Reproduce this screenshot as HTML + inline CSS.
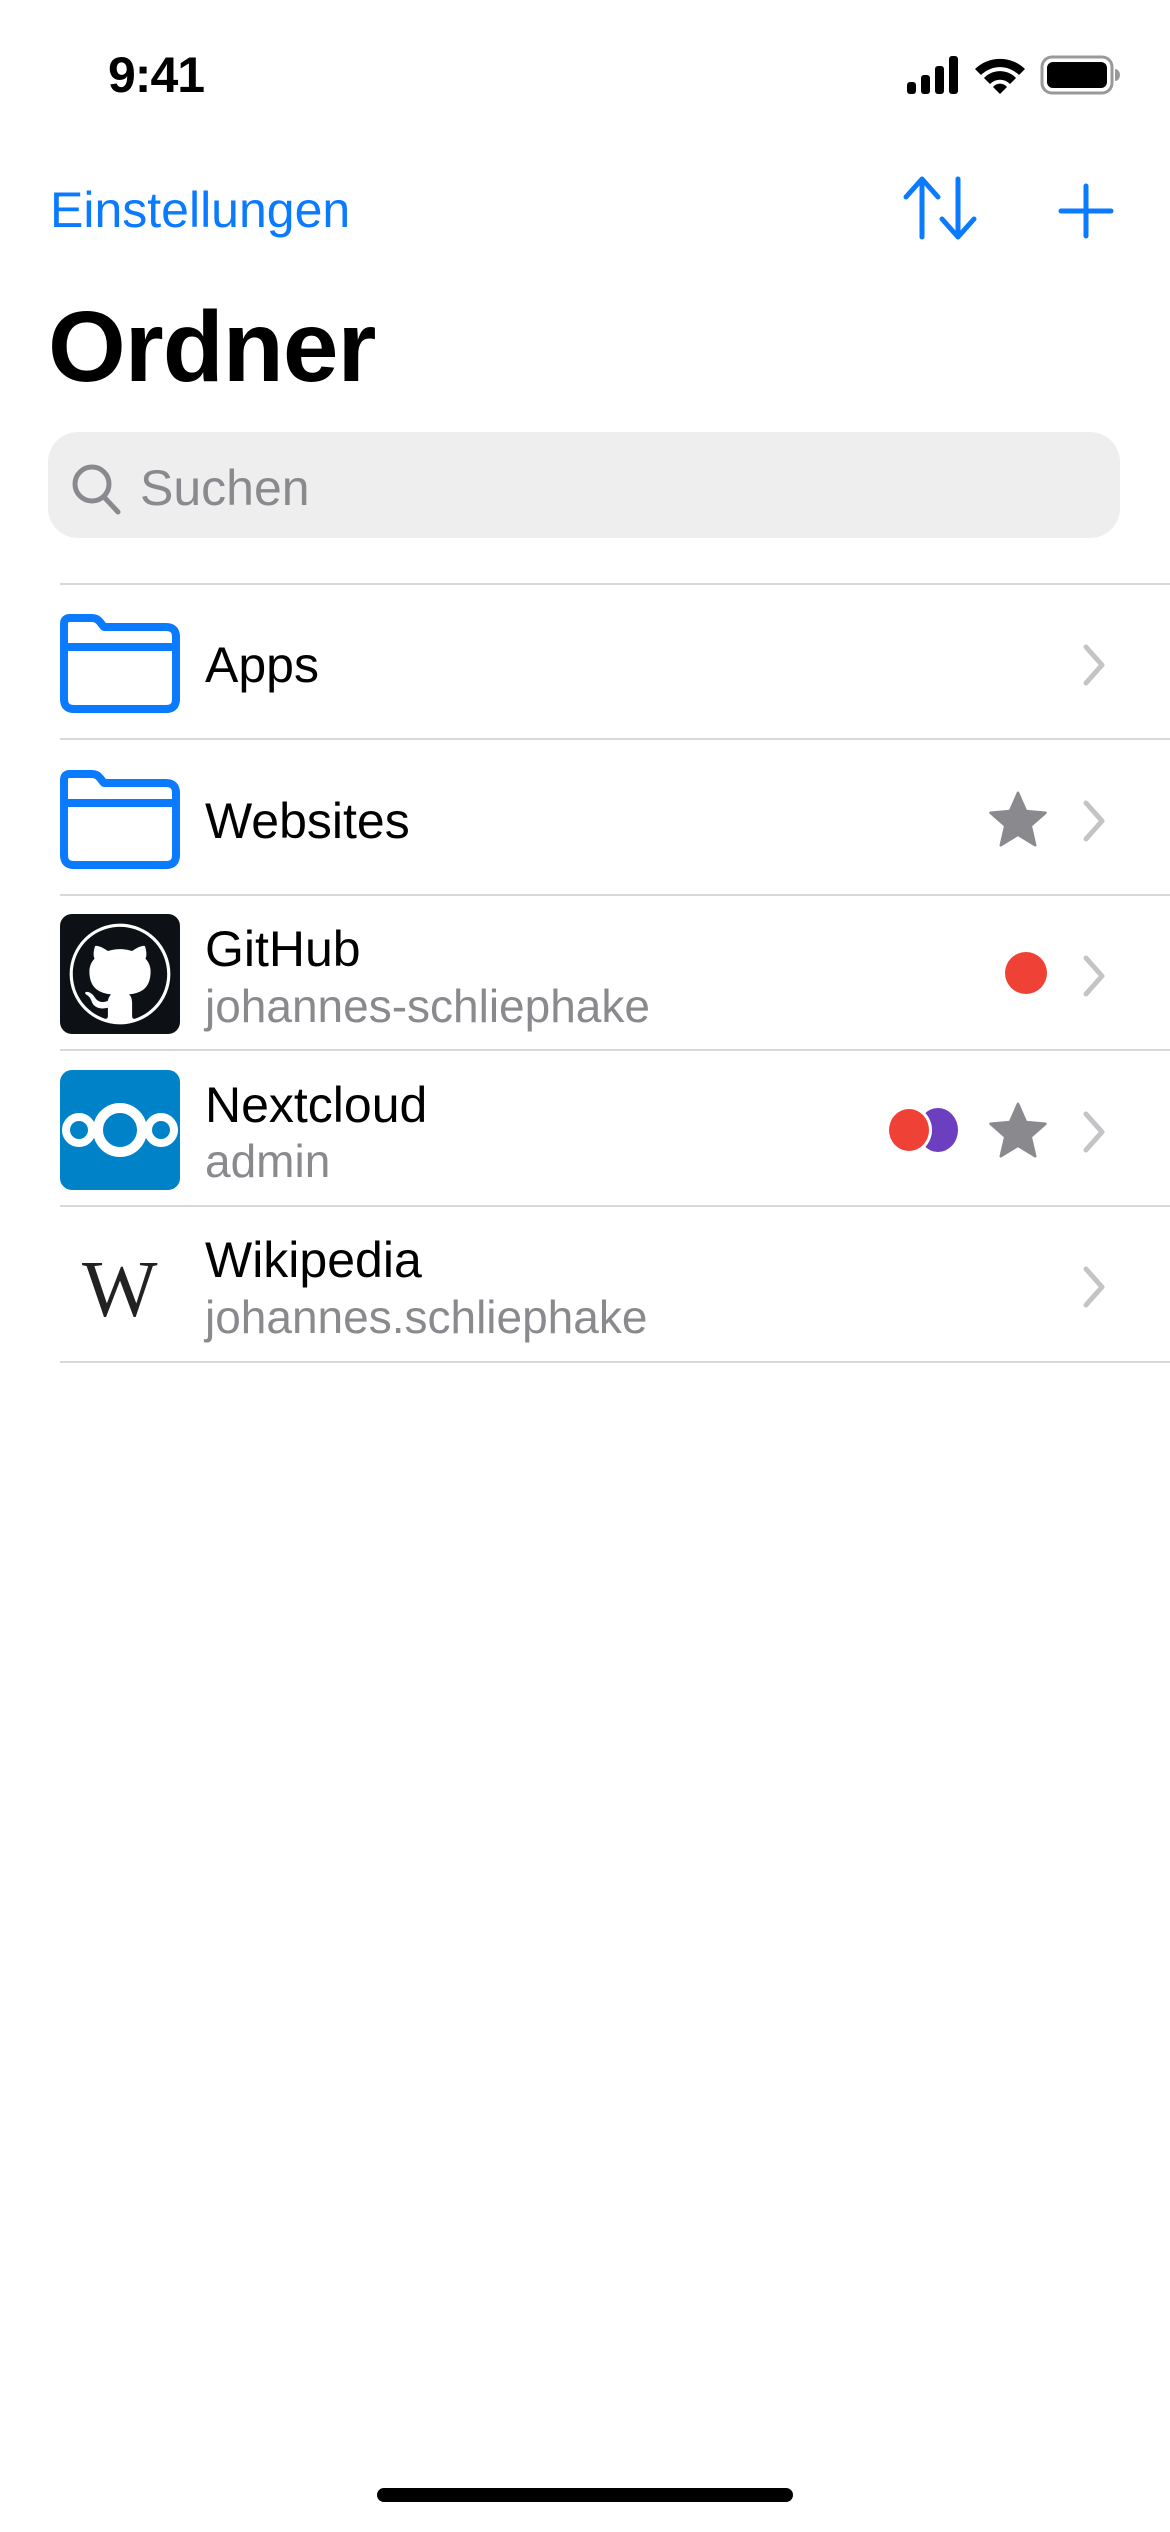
<!DOCTYPE html>
<html><head><meta charset="utf-8"><style>
*{margin:0;padding:0;box-sizing:border-box}
body{width:1170px;height:2532px;background:#fff;position:relative;overflow:hidden;font-family:"Liberation Sans",sans-serif}
.abs{position:absolute}
.sep{position:absolute;left:60px;right:0;height:2px;background:#d8d8dc}
.title{position:absolute;left:205px;font-size:50px;color:#000;line-height:1}
.sub{position:absolute;left:205px;font-size:46px;color:#8a8a8e;line-height:1}
.chev{position:absolute;left:1080px}
</style></head><body>
<div class="abs" style="left:108px;top:46px;font-size:50px;font-weight:bold;letter-spacing:-1px">9:41</div>
<svg class="abs" style="left:905px;top:54px" width="215" height="42" viewBox="0 0 215 42">
<rect x="2" y="28" width="9" height="12" rx="3"/><rect x="16" y="21" width="9" height="19" rx="3"/><rect x="30" y="12" width="9" height="28" rx="3"/><rect x="44" y="2" width="9" height="38" rx="3"/>
<path d="M70 15 A36 36 0 0 1 120 15 L114 21 A27 27 0 0 0 76 21Z M79 24 A22 22 0 0 1 111 24 L105 30 A14 14 0 0 0 85 30Z M88 33 A9 9 0 0 1 102 33 L95 40Z"/>
<rect x="137" y="3" width="70" height="36" rx="10" fill="none" stroke="#999" stroke-width="3"/><rect x="142" y="8" width="60" height="26" rx="6"/><path d="M210 15 a5 6 0 0 1 0 12z" fill="#999"/>
</svg>
<div class="abs" style="left:50px;top:181px;font-size:50px;color:#0a7aff">Einstellungen</div>
<svg class="abs" style="left:900px;top:175px" width="80" height="66" viewBox="0 0 80 66" fill="none" stroke="#0a7aff" stroke-width="5" stroke-linecap="round" stroke-linejoin="round">
<path d="M22 62V4M6 22L22 4L38 22"/><path d="M58 4V62M42 44L58 62L74 44"/></svg>
<svg class="abs" style="left:1058px;top:183px" width="56" height="56" viewBox="0 0 56 56" stroke="#0a7aff" stroke-width="5" stroke-linecap="round"><path d="M28 3V53M3 28H53"/></svg>
<div class="abs" style="left:48px;top:290px;font-size:100px;font-weight:bold;letter-spacing:-1px">Ordner</div>
<div class="abs" style="left:48px;top:432px;width:1072px;height:106px;border-radius:30px;background:#eeeeef"></div>
<svg class="abs" style="left:70px;top:462px" width="54" height="56" viewBox="0 0 54 56" fill="none" stroke="#8a8a8e" stroke-width="5" stroke-linecap="round"><circle cx="22" cy="22" r="17"/><path d="M34 35L48 50"/></svg>
<div class="abs" style="left:140px;top:459px;font-size:50px;color:#8a8a8e">Suchen</div>
<div class="sep" style="top:583px"></div><div class="sep" style="top:738px"></div><div class="sep" style="top:894px"></div><div class="sep" style="top:1049px"></div><div class="sep" style="top:1205px"></div><div class="sep" style="top:1361px"></div>
<svg class="abs" style="left:60px;top:614px" width="120" height="100" viewBox="0 0 120 100" fill="none" stroke="#0a7aff" stroke-width="8" stroke-linejoin="round"><path d="M4 10q0-6 6-6h22q5 0 8 4l4 5h62q10 0 10 10v62q0 10-10 10H14q-10 0-10-10z"/><path d="M4 33H116"/></svg>
<svg class="abs" style="left:60px;top:770px" width="120" height="100" viewBox="0 0 120 100" fill="none" stroke="#0a7aff" stroke-width="8" stroke-linejoin="round"><path d="M4 10q0-6 6-6h22q5 0 8 4l4 5h62q10 0 10 10v62q0 10-10 10H14q-10 0-10-10z"/><path d="M4 33H116"/></svg>
<div class="title" style="top:640px">Apps</div>
<div class="title" style="top:796px">Websites</div>
<svg class="chev" style="top:643px" width="30" height="44" viewBox="0 0 30 44"><path d="M6 4L22 22L6 40" fill="none" stroke="#c4c4c7" stroke-width="5" stroke-linecap="round" stroke-linejoin="round"/></svg>
<svg class="chev" style="top:799px" width="30" height="44" viewBox="0 0 30 44"><path d="M6 4L22 22L6 40" fill="none" stroke="#c4c4c7" stroke-width="5" stroke-linecap="round" stroke-linejoin="round"/></svg>
<svg class="chev" style="top:954px" width="30" height="44" viewBox="0 0 30 44"><path d="M6 4L22 22L6 40" fill="none" stroke="#c4c4c7" stroke-width="5" stroke-linecap="round" stroke-linejoin="round"/></svg>
<svg class="chev" style="top:1110px" width="30" height="44" viewBox="0 0 30 44"><path d="M6 4L22 22L6 40" fill="none" stroke="#c4c4c7" stroke-width="5" stroke-linecap="round" stroke-linejoin="round"/></svg>
<svg class="chev" style="top:1265px" width="30" height="44" viewBox="0 0 30 44"><path d="M6 4L22 22L6 40" fill="none" stroke="#c4c4c7" stroke-width="5" stroke-linecap="round" stroke-linejoin="round"/></svg>
<svg class="abs" style="left:988px;top:790px" width="60" height="58" viewBox="0 0 24 23"><path d="M12 1l3.2 7.3 7.8.7-5.9 5.2 1.8 7.8L12 17.8 5.1 22l1.8-7.8L1 9l7.8-.7z" fill="#8a8a8e" stroke="#8a8a8e" stroke-linejoin="round" stroke-width="1"/></svg>
<svg class="abs" style="left:988px;top:1101px" width="60" height="58" viewBox="0 0 24 23"><path d="M12 1l3.2 7.3 7.8.7-5.9 5.2 1.8 7.8L12 17.8 5.1 22l1.8-7.8L1 9l7.8-.7z" fill="#8a8a8e" stroke="#8a8a8e" stroke-linejoin="round" stroke-width="1"/></svg>
<div class="abs" style="left:60px;top:914px;width:120px;height:120px;border-radius:12px;background:#0d1014"></div>
<svg class="abs" style="left:69px;top:923px" width="102" height="102" viewBox="0 0 16 16"><circle cx="8" cy="8" r="7.9" fill="#fff"/><path fill="#0d1014" d="M8 .6C3.9.6.6 3.9.6 8c0 3.3 2.1 6 5 7 .4.1.5-.2.5-.4v-1.3c-2.1.5-2.5-.9-2.5-.9-.3-.9-.8-1.1-.8-1.1-.7-.5.1-.5.1-.5.7.1 1.1.8 1.1.8.7 1.1 1.7.8 2.1.6.1-.5.3-.8.5-1-1.6-.2-3.4-.8-3.4-3.6 0-.8.3-1.5.8-2-.1-.2-.3-.9.1-2 0 0 .6-.2 2 .8.6-.2 1.2-.3 1.9-.3s1.3.1 1.9.3c1.4-1 2-.8 2-.8.4 1.1.2 1.8.1 2 .5.5.8 1.2.8 2 0 2.8-1.7 3.4-3.4 3.6.3.2.5.7.5 1.4v2c0 .2.1.5.5.4 2.9-1 5-3.7 5-7C15.4 3.9 12.1.6 8 .6z"/></svg>
<div class="title" style="top:924px">GitHub</div>
<div class="sub" style="top:983px">johannes-schliephake</div>
<div class="abs" style="left:1005px;top:952px;width:42px;height:42px;border-radius:50%;background:#ef4136"></div>
<div class="abs" style="left:60px;top:1070px;width:120px;height:120px;border-radius:12px;background:#0082c9"></div>
<svg class="abs" style="left:60px;top:1070px" width="120" height="120" viewBox="0 0 120 120" fill="none" stroke="#fff"><circle cx="60" cy="60" r="22" stroke-width="10"/><circle cx="19" cy="60" r="13" stroke-width="8"/><circle cx="101" cy="60" r="13" stroke-width="8"/></svg>
<div class="title" style="top:1080px">Nextcloud</div>
<div class="sub" style="top:1138px">admin</div>
<div class="abs" style="left:918px;top:1108px;width:40px;height:44px;border-radius:50%;background:#6b3fbf"></div>
<div class="abs" style="left:886px;top:1106px;width:46px;height:48px;border-radius:50%;background:#ef4136;border:3px solid #fff"></div>
<div class="abs" style="left:82px;top:1250px;font-size:80px;font-family:'Liberation Serif',serif;color:#222;line-height:1">W</div>
<div class="title" style="top:1235px">Wikipedia</div>
<div class="sub" style="top:1294px">johannes.schliephake</div>
<div class="abs" style="left:377px;top:2488px;width:416px;height:14px;border-radius:7px;background:#000"></div>
</body></html>
